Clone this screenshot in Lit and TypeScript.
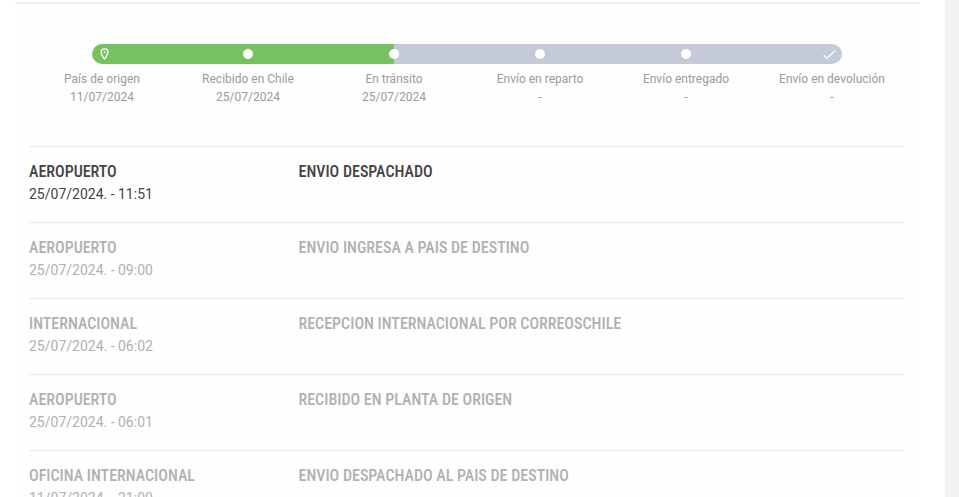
import { LitElement, html, css, svg } from "lit";
import { customElement, property } from "lit/decorators.js";
import { classMap } from "lit/directives/class-map.js";

interface Step {
  label: string;
  date: string;
  state: "done" | "current" | "pending";
}

interface TrackingEvent {
  place: string;
  date: string;
  status: string;
}

const STEPS: Step[] = [
  { label: "País de origen", date: "11/07/2024", state: "done" },
  { label: "Recibido en Chile", date: "25/07/2024", state: "done" },
  { label: "En tránsito", date: "25/07/2024", state: "current" },
  { label: "Envío en reparto", date: "-", state: "pending" },
  { label: "Envío entregado", date: "-", state: "pending" },
  { label: "Envío en devolución", date: "-", state: "pending" },
];

const EVENTS: TrackingEvent[] = [
  { place: "AEROPUERTO", date: "25/07/2024. - 11:51", status: "ENVIO DESPACHADO" },
  { place: "AEROPUERTO", date: "25/07/2024. - 09:00", status: "ENVIO INGRESA A PAIS DE DESTINO" },
  { place: "INTERNACIONAL", date: "25/07/2024. - 06:02", status: "RECEPCION INTERNACIONAL POR CORREOSCHILE" },
  { place: "AEROPUERTO", date: "25/07/2024. - 06:01", status: "RECIBIDO EN PLANTA DE ORIGEN" },
  { place: "OFICINA INTERNACIONAL", date: "11/07/2024. - 21:00", status: "ENVIO DESPACHADO AL PAIS DE DESTINO" },
];

const pinIcon = svg`<svg class="pin" viewBox="0 0 9 12" aria-hidden="true">
  <path d="M4.5 11.2C3.4 8.9 1 6.6 1 4.3a3.5 3.5 0 0 1 7 0c0 2.3-2.4 4.6-3.5 6.9z"
    fill="none" stroke="#fff" stroke-width="1.3" stroke-linejoin="round"/>
  <circle cx="4.5" cy="4.3" r="1" fill="#fff"/>
</svg>`;

const checkIcon = svg`<svg class="check" viewBox="0 0 13 9" aria-hidden="true">
  <path d="M0.6 5.2 3.8 8.2 12.4 0.6" fill="none" stroke="#fff" stroke-width="1.3"/>
</svg>`;

@customElement("progress-steps")
export class ProgressSteps extends LitElement {
  @property({ attribute: false }) steps: Step[] = [];

  static styles = css`
    :host {
      display: block;
    }
    .steps {
      display: grid;
      grid-template-columns: repeat(6, 1fr);
      margin: 0;
      padding: 0;
      list-style: none;
      text-align: center;
      font-size: 12px;
      line-height: 18px;
      color: #9b9b9b;
    }
    .segment {
      display: flex;
      align-items: center;
      justify-content: center;
      height: 20px;
      margin-bottom: 6px;
      background: #c5cad9;
    }
    .done .segment {
      background: #77c163;
    }
    .current .segment {
      background: linear-gradient(to right, #77c163 50%, #c5cad9 50%);
    }
    .step:first-child .segment {
      justify-content: flex-start;
      margin-left: calc(50% - 10px);
      padding-left: 8px;
      border-radius: 10px 0 0 10px;
    }
    .step:last-child .segment {
      justify-content: flex-end;
      margin-right: calc(50% - 10px);
      padding-right: 6px;
      border-radius: 0 10px 10px 0;
    }
    .dot {
      width: 10px;
      height: 10px;
      border-radius: 50%;
      background: #fff;
    }
    .pin {
      width: 9px;
      height: 12px;
    }
    .check {
      width: 13px;
      height: 9px;
    }
    .line {
      display: block;
    }
  `;

  private marker(index: number) {
    if (index === 0) return pinIcon;
    if (index === this.steps.length - 1) return checkIcon;
    return html`<span class="dot"></span>`;
  }

  render() {
    return html`<ol class="steps">
      ${this.steps.map(
        (step, i) => html`<li class=${classMap({ step: true, [step.state]: true })}>
          <div class="segment">${this.marker(i)}</div>
          <span class="line">${step.label}</span>
          <span class="line">${step.date}</span>
        </li>`
      )}
    </ol>`;
  }
}

@customElement("event-list")
export class EventList extends LitElement {
  @property({ attribute: false }) events: TrackingEvent[] = [];

  static styles = css`
    :host {
      display: block;
    }
    .events {
      margin: 0;
      padding: 0;
      list-style: none;
      color: #b1b1b1;
    }
    .event {
      display: grid;
      grid-template-columns: 4fr 9fr;
      padding: 13px 0 16px;
      border-top: 1px solid #ebebeb;
    }
    .event:first-child {
      color: #444;
    }
    .title {
      margin: 0;
      font-family: "Roboto Condensed", Roboto, sans-serif;
      font-size: 16px;
      font-weight: 500;
      line-height: 23px;
    }
    .date {
      margin: 0;
      font-size: 14px;
      line-height: 23px;
    }
  `;

  render() {
    return html`<ul class="events">
      ${this.events.map(
        (event) => html`<li class="event">
          <div>
            <h3 class="title">${event.place}</h3>
            <p class="date">${event.date}</p>
          </div>
          <p class="title">${event.status}</p>
        </li>`
      )}
    </ul>`;
  }
}

@customElement("app-root")
export class AppRoot extends LitElement {
  static styles = css`
    :host {
      display: block;
      height: 100vh;
      overflow: hidden;
      padding-right: 14px;
      box-sizing: border-box;
      background: #f2f2f2;
      font-family: Roboto, sans-serif;
    }
    .page {
      box-sizing: border-box;
      min-height: 100%;
      padding: 2px 25px 0 15px;
      background: #fff;
    }
    .card {
      padding: 40px 15px 0 14px;
      border-top: 2px solid #f2f2f2;
      background: #fefefe;
    }
    .history {
      margin-top: 40px;
    }
  `;

  render() {
    return html`<main class="page">
      <section class="card">
        <progress-steps .steps=${STEPS}></progress-steps>
        <event-list class="history" .events=${EVENTS}></event-list>
      </section>
    </main>`;
  }
}
